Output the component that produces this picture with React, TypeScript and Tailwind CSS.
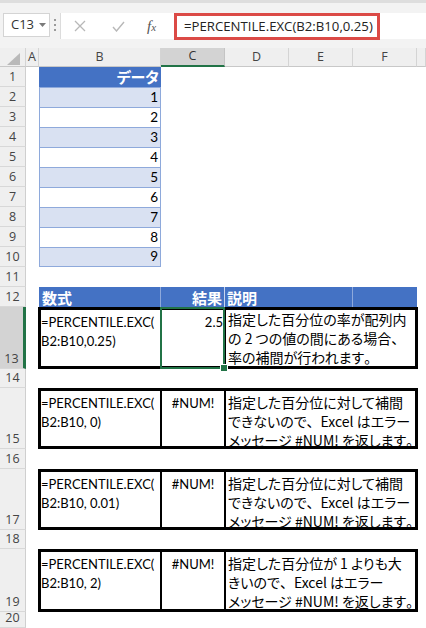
import React from "react";

const UI = "font-['Open_Sans','Noto_Sans',sans-serif]";
const CAL = "font-['Lato','Liberation_Sans',sans-serif]";
const JP = "font-['Noto_Sans_CJK_JP',sans-serif] [font-feature-settings:'palt']";

function RH({ n, h, sel }: { n: number; h: string; sel?: boolean }) {
  return (
    <div
      className={`${h} w-[26px] shrink-0 flex items-end justify-center pb-[1px] leading-[17px] text-[12.5px] text-[#444] border-b border-b-[#d8d8d8] ${UI} ${
        sel ? "bg-[#d3d3d3] border-r-[3px] border-r-[#217346] text-[#333]" : "bg-[#efefef] border-r border-r-[#cfcfcf]"
      }`}
    >
      {n}
    </div>
  );
}

function Row({ n, h, sel, children }: { n: number; h: string; sel?: boolean; children?: React.ReactNode }) {
  return (
    <div className={`${h} flex`}>
      <RH n={n} h={h} sel={sel} />
      <div className="w-[13px] shrink-0" />
      {children}
    </div>
  );
}

function DataCell({ v, alt, last }: { v: string; alt: boolean; last?: boolean }) {
  return (
    <div
      className={`w-[122px] shrink-0 flex items-end justify-end pr-[2px] pb-[1px] leading-[17px] text-[13.5px] text-black border-x border-t border-[#8ea9db] ${CAL} ${
        alt ? "bg-[#d9e1f2]" : "bg-white"
      } ${last ? "border-b" : ""}`}
    >
      {v}
    </div>
  );
}

function JPLine({ t }: { t: string }) {
  const parts = t.split(/([、。])/);
  return (
    <div className="whitespace-nowrap">
      {parts.map((p, i) =>
        p === "、" || p === "。" ? (
          <span key={i} className="[font-feature-settings:normal]">
            {p}
          </span>
        ) : (
          <React.Fragment key={i}>{p}</React.Fragment>
        )
      )}
    </div>
  );
}

function Box({
  f2,
  res,
  center,
  lines,
  sel,
  descTop,
}: {
  f2: string;
  res: string;
  center?: boolean;
  lines: string[];
  sel?: boolean;
  descTop: string;
}) {
  return (
    <div className="-ml-[1px] w-[380px] shrink-0 h-full border-[3px] border-black flex bg-white">
      <div className={`w-[121px] shrink-0 border-r-2 border-black pt-[3px] leading-[18.5px] text-[13px] text-black ${CAL}`}>
        <div className="whitespace-nowrap">=PERCENTILE.EXC(</div>
        <div className="whitespace-nowrap">{f2}</div>
      </div>
      <div
        className={`relative w-[64px] shrink-0 border-r-2 border-black pt-[3px] leading-[18.5px] text-[13px] text-black ${CAL} ${
          center ? "text-center" : "text-right pr-[1px]"
        }`}
      >
        {res}
        {sel && (
          <div className="absolute -left-[2px] -right-[1px] -top-[3px] -bottom-[3px] border-2 border-[#217346]">
            <div className="absolute -right-[4px] -bottom-[4px] w-[6px] h-[6px] bg-[#217346] outline outline-1 outline-white" />
          </div>
        )}
      </div>
      <div className={`flex-1 pl-[2px] ${descTop} leading-[19px] text-[14px] text-black ${JP}`}>
        {lines.map((l, i) => (
          <JPLine key={i} t={l} />
        ))}
      </div>
    </div>
  );
}

function Toolbar() {
  return (
    <div className="h-[48px] bg-[#f3f3f3] border-t-[3px] border-t-[#dedede] pt-[10px] flex items-start">
      <div className={`ml-[3px] w-[47px] h-[24px] shrink-0 bg-white border border-[#d4d4d4] flex items-center pl-[7px] text-[13px] text-[#333] ${UI}`}>
        <span>C13</span>
        <svg width="7" height="5" viewBox="0 0 7 5" className="ml-[5px]">
          <polygon points="0,0 7,0 3.5,4" fill="#7a7a7a" />
        </svg>
      </div>
      <div className="w-[10px] h-[24px] shrink-0 flex flex-col items-center justify-center gap-[3px]">
        <div className="w-[2px] h-[2px] bg-[#9a9a9a]" />
        <div className="w-[2px] h-[2px] bg-[#9a9a9a]" />
        <div className="w-[2px] h-[2px] bg-[#9a9a9a]" />
      </div>
      <div className="flex-1 h-[26px] bg-white border-l border-[#dcdcdc] flex items-start">
        <div className="w-[113px] h-[26px] shrink-0 flex items-center">
          <svg width="12" height="12" viewBox="0 0 12 12" className="ml-[13px]">
            <path d="M1 1 L11 11 M11 1 L1 11" stroke="#b8b8b8" strokeWidth="1.3" fill="none" />
          </svg>
          <svg width="13" height="11" viewBox="0 0 13 11" className="ml-[26px]">
            <path d="M1 6 L4.5 10 L12 1" stroke="#b8b8b8" strokeWidth="1.4" fill="none" />
          </svg>
          <span className="ml-[22px] italic font-['Liberation_Serif',serif] text-[15px] text-[#555] leading-none">
            f<span className="text-[11px]">x</span>
          </span>
        </div>
        <div className={`w-[206px] h-[27px] shrink-0 border-[3px] border-[#db4a46] flex items-center pl-[7px] text-[13.2px] text-[#222] whitespace-nowrap ${UI}`}>
          =PERCENTILE.EXC(B2:B10,0.25)
        </div>
      </div>
    </div>
  );
}

function ColHeaders() {
  const base = `h-[19px] shrink-0 flex items-center justify-center text-[12.5px] text-[#444] border-r border-r-[#d4d4d4] border-b border-b-[#c8c8c8] bg-[#efefef] ${UI}`;
  return (
    <div className="h-[19px] flex">
      <div className={`${base} w-[26px] relative`}>
        <svg width="13" height="12" viewBox="0 0 13 12" className="absolute left-[7px] top-[5px]">
          <polygon points="0,12 13,0 13,12" fill="#b9b9b9" />
        </svg>
      </div>
      <div className={`${base} w-[13px]`}>A</div>
      <div className={`${base} w-[122px]`}>B</div>
      <div className={`h-[19px] w-[64px] shrink-0 flex items-center justify-center text-[12.5px] text-[#333] border-r border-r-[#c4c4c4] border-b-2 border-b-[#217346] bg-[#d3d3d3] ${UI}`}>
        C
      </div>
      <div className={`${base} w-[64px]`}>D</div>
      <div className={`${base} w-[64px]`}>E</div>
      <div className={`${base} w-[64px]`}>F</div>
      <div className={`${base} flex-1`} />
    </div>
  );
}

export default function App() {
  const data = ["1", "2", "3", "4", "5", "6", "7", "8", "9"];
  const desc2 = ["指定した百分位に対して補間", "できないので、Excel はエラー", "メッセージ #NUM! を返します。"];
  return (
    <div className="w-[426px] h-[628px] overflow-hidden bg-white">
      <Toolbar />
      <ColHeaders />
      <Row n={1} h="h-[20px]">
        <div className={`w-[122px] shrink-0 bg-[#4472c4] flex items-end justify-end pr-[2px] pb-[1px] leading-[18px] text-[15px] font-bold text-white ${JP}`}>
          データ
        </div>
      </Row>
      {data.map((v, i) => (
        <Row key={v} n={i + 2} h="h-[20px]">
          <DataCell v={v} alt={i % 2 === 0} last={i === data.length - 1} />
        </Row>
      ))}
      <Row n={11} h="h-[20px]" />
      <Row n={12} h="h-[20px]">
        <div className={`w-[378px] shrink-0 bg-[#4472c4] flex text-[15px] font-bold text-white leading-[19px] ${JP}`}>
          <div className="w-[122px] shrink-0 border-r border-[#8ea9db] pl-[3px] flex items-end">数式</div>
          <div className="w-[64px] shrink-0 border-r border-[#c9d5ee] pr-[2px] flex items-end justify-end">結果</div>
          <div className="w-[128px] shrink-0 border-r border-[#8ea9db] pl-[2px] flex items-end">説明</div>
          <div className="flex-1" />
        </div>
      </Row>
      <Row n={13} h="h-[62px]" sel>
        <Box
          f2="B2:B10,0.25)"
          res="2.5"
          sel
          descTop="pt-[0px]"
          lines={["指定した百分位の率が配列内", "の 2 つの値の間にある場合、", "率の補間が行われます。"]}
        />
      </Row>
      <Row n={14} h="h-[19px]" />
      <Row n={15} h="h-[61px]">
        <Box f2="B2:B10, 0)" res="#NUM!" center descTop="pt-[2px]" lines={desc2} />
      </Row>
      <Row n={16} h="h-[20px]" />
      <Row n={17} h="h-[61px]">
        <Box f2="B2:B10, 0.01)" res="#NUM!" center descTop="pt-[2px]" lines={desc2} />
      </Row>
      <Row n={18} h="h-[19px]" />
      <Row n={19} h="h-[63px]">
        <Box
          f2="B2:B10, 2)"
          res="#NUM!"
          center
          descTop="pt-[2px]"
          lines={["指定した百分位が 1 よりも大", "きいので、Excel はエラー", "メッセージ #NUM! を返します。"]}
        />
      </Row>
      <Row n={20} h="h-[16px]" />
    </div>
  );
}
